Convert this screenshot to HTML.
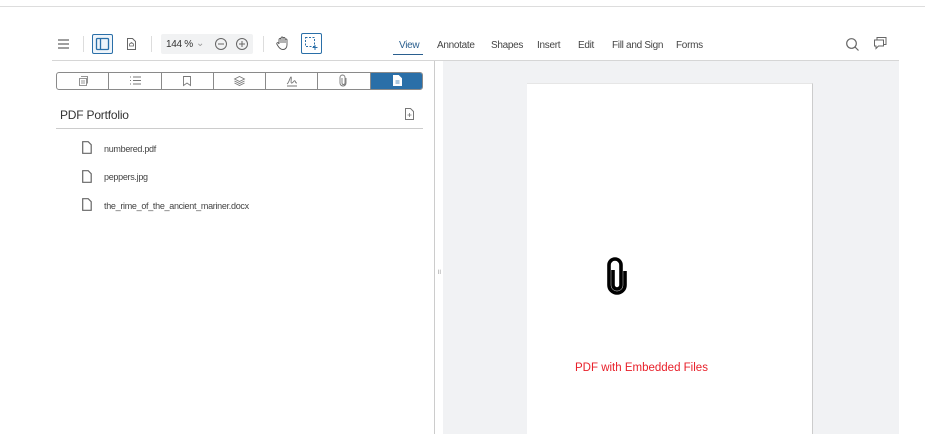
<!DOCTYPE html>
<html><head><meta charset="utf-8"><style>
*{margin:0;padding:0;box-sizing:border-box}
body{width:925px;height:434px;overflow:hidden;background:#fff;font-family:"Liberation Sans",sans-serif;position:relative;color:#333}
.a{position:absolute}
.t{font-size:10px;color:#444;letter-spacing:-0.3px}
svg{position:absolute;overflow:visible}
</style></head><body>
<div class="a" style="left:0;top:6px;width:925px;height:1px;background:#ddd"></div>
<div class="a" style="left:52px;top:60px;width:847px;height:1px;background:#d6d6d6"></div>
<svg style="left:58px;top:39px" width="12" height="10"><path d="M0 1h11M0 5h11M0 9h11" stroke="#666" stroke-width="1.2"/></svg>
<div class="a" style="left:83px;top:36px;width:1px;height:16px;background:#ddd"></div>
<div class="a" style="left:92px;top:34px;width:21px;height:20px;border:1px solid #2a6fa8;border-radius:2px;background:#eef4fa"></div>
<svg style="left:96px;top:38px" width="13" height="12"><rect x="0.5" y="0.5" width="12" height="11" rx="1" fill="none" stroke="#2a6fa8" stroke-width="1.3"/><path d="M4.5 0.5v11" stroke="#2a6fa8" stroke-width="1.3"/></svg>
<svg style="left:127px;top:38px" width="9" height="12"><path d="M0.5 0.5h5l3 3v8h-8z" fill="none" stroke="#666"/><path d="M2.5 8v-2l2-1.5 2 1.5v2z" fill="none" stroke="#666" stroke-width=".8"/></svg>
<div class="a" style="left:151px;top:36px;width:1px;height:16px;background:#ddd"></div>
<div class="a" style="left:161px;top:34px;width:92px;height:20px;background:#f1f2f3;border-radius:2px"></div>
<div class="a t" style="left:166px;top:39px;color:#333">144 %</div>
<div class="a t" style="left:196px;top:38px;color:#999">⌄</div>
<svg style="left:215px;top:38px" width="12" height="12"><circle cx="6" cy="6" r="5.5" fill="none" stroke="#666"/><path d="M3 6h6" stroke="#666"/></svg>
<svg style="left:236px;top:38px" width="12" height="12"><circle cx="6" cy="6" r="5.5" fill="none" stroke="#666"/><path d="M3 6h6M6 3v6" stroke="#666"/></svg>
<div class="a" style="left:263px;top:36px;width:1px;height:16px;background:#ddd"></div>
<svg style="left:276px;top:36px" width="13" height="14"><path d="M3 8V3.5a1 1 0 012 0V7M5 7V2a1 1 0 012 0v5M7 7V2.5a1 1 0 012 0V7M9 7V4a1 1 0 012 0v5c0 3-2 4.5-4 4.5S3.5 12.5 2 10L.8 8a1 1 0 011.7-1L3 8" fill="none" stroke="#555" stroke-width=".9"/></svg>
<div class="a" style="left:301px;top:33px;width:21px;height:21px;border:1px solid #2a6fa8;border-radius:2px"></div>
<svg style="left:305px;top:37px" width="13" height="13"><path d="M.5 .5h9v9h-9z" fill="none" stroke="#2a6fa8" stroke-dasharray="2 1.5"/><path d="M10 8v5M7.5 10.5h5" stroke="#2a6fa8"/></svg>
<div class="a t" style="left:399px;top:40px;color:#2a5f8f">View</div>
<div class="a" style="left:393px;top:54px;width:30px;height:1px;background:#2a5f8f"></div>
<div class="a t" style="left:437px;top:40px">Annotate</div>
<div class="a t" style="left:491px;top:40px">Shapes</div>
<div class="a t" style="left:537px;top:40px">Insert</div>
<div class="a t" style="left:578px;top:40px">Edit</div>
<div class="a t" style="left:612px;top:40px">Fill and Sign</div>
<div class="a t" style="left:676px;top:40px">Forms</div>
<svg style="left:846px;top:38px" width="13" height="13"><circle cx="5.5" cy="5.5" r="4.8" fill="none" stroke="#666" stroke-width="1.2"/><path d="M9 9l3.5 3.5" stroke="#666" stroke-width="1.2"/></svg>
<svg style="left:874px;top:37px" width="13" height="13"><path d="M3 2.5V.5h9v7h-2M.5 3h9v6h-5l-2.5 2.5V9h-1.5z" fill="none" stroke="#666"/></svg>
<div class="a" style="left:56px;top:72px;width:367px;height:18px;border:1px solid #8a8a8a;border-radius:3px;overflow:hidden;display:flex">
<div style="flex:1;border-right:1px solid #8a8a8a"></div><div style="flex:1;border-right:1px solid #8a8a8a"></div><div style="flex:1;border-right:1px solid #8a8a8a"></div><div style="flex:1;border-right:1px solid #8a8a8a"></div><div style="flex:1;border-right:1px solid #8a8a8a"></div><div style="flex:1;border-right:1px solid #8a8a8a"></div><div style="flex:1;background:#2a6fa8"></div></div>
<svg style="left:78px;top:76px" width="10" height="10"><path d="M1.5 2.5h7v7h-7zM3 .5h6.5v7M3 5h4M3 7h4" fill="none" stroke="#777" stroke-width=".8"/></svg>
<svg style="left:130px;top:76px" width="11" height="9"><path d="M0 1h1M3 1h8M0 4.5h1M3 4.5h8M0 8h1M3 8h8" stroke="#777"/></svg>
<svg style="left:183px;top:76px" width="8" height="10"><path d="M.5.5h7v9L4 7 .5 9.5z" fill="none" stroke="#777" stroke-width=".9"/></svg>
<svg style="left:234px;top:76px" width="11" height="10"><path d="M5.5.5L10.5 3 5.5 5.5.5 3zM.5 5l5 2.5 5-2.5M.5 7l5 2.5 5-2.5" fill="none" stroke="#777" stroke-width=".8"/></svg>
<svg style="left:286px;top:75px" width="12" height="12"><path d="M1 9c2-1 3-7 4-7s-1 7 1 6 2-3 3-2 0 2 2 2M1 11h10" fill="none" stroke="#777" stroke-width=".9"/></svg>
<svg style="left:340px;top:75px" width="7" height="11"><path d="M2 3v5a1.5 1.5 0 003 0V2.5a2.5 2.5 0 00-5 0V8a3 3 0 006 0V3" fill="none" stroke="#777" stroke-width=".9"/></svg>
<svg style="left:393px;top:75px" width="9" height="11"><path d="M.5.5h5l3 3v7h-8z" fill="#fff" stroke="#fff"/><path d="M2.5 6h4M2.5 8h4" stroke="#2a6fa8" stroke-width=".8"/></svg>
<div class="a" style="left:60px;top:108px;font-size:12px;color:#333;letter-spacing:-0.2px">PDF Portfolio</div>
<svg style="left:405px;top:108px" width="9" height="12"><path d="M.5.5h5l3 3v8h-8z" fill="none" stroke="#777"/><path d="M4.5 5v4M2.5 7h4" stroke="#777" stroke-width=".8"/></svg>
<div class="a" style="left:56px;top:128px;width:367px;height:1px;background:#ccc"></div>
<svg style="left:82px;top:141px" width="10" height="13"><path d="M.7.7h5.5l3 3v8.6H.7z" fill="none" stroke="#666" stroke-width="1.2"/></svg>
<div class="a t" style="left:104px;top:144px;font-size:9px">numbered.pdf</div>
<svg style="left:82px;top:170px" width="10" height="13"><path d="M.7.7h5.5l3 3v8.6H.7z" fill="none" stroke="#666" stroke-width="1.2"/></svg>
<div class="a t" style="left:104px;top:172px;font-size:9px">peppers.jpg</div>
<svg style="left:82px;top:198px" width="10" height="13"><path d="M.7.7h5.5l3 3v8.6H.7z" fill="none" stroke="#666" stroke-width="1.2"/></svg>
<div class="a t" style="left:104px;top:201px;font-size:9px">the_rime_of_the_ancient_mariner.docx</div>
<div class="a" style="left:434px;top:61px;width:1px;height:373px;background:#ccc"></div>
<div class="a" style="left:437px;top:268px;font-size:7px;color:#999">॥</div>
<div class="a" style="left:443px;top:61px;width:456px;height:373px;background:#f1f2f4"></div>
<div class="a" style="left:527px;top:83px;width:286px;height:351px;background:#fff;border-right:1px solid #ccc;border-top:1px solid #e6e6e6"></div>
<svg style="left:605px;top:257px" width="24" height="40"><path d="M8 13v15a4 4 0 008 0V8a6 6 0 00-12 0v20a8 8 0 0016 0V14" fill="none" stroke="#000" stroke-width="3.6"/></svg>
<div class="a" style="left:575px;top:362px;font-size:11.5px;color:#e8202a">PDF with Embedded Files</div>
</body></html>
